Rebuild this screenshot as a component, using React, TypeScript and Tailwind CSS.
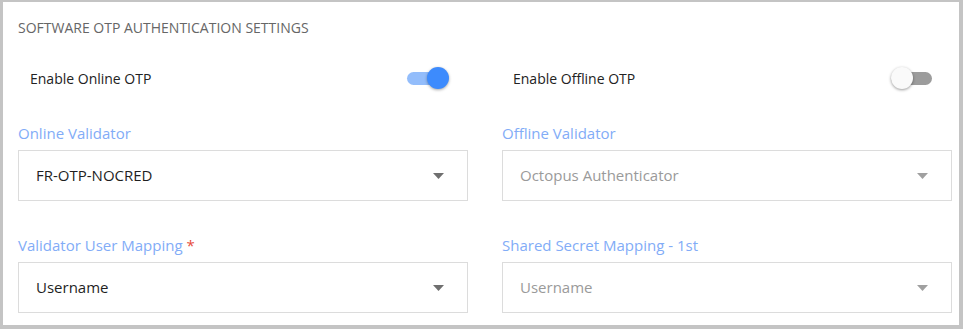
import React from "react";

function Toggle({ on }: { on: boolean }) {
    return (
        <div className="relative w-[42px] h-[24px] flex items-center">
            <div className={`h-[13px] w-[41px] rounded-full ${on ? "bg-[#93bdfb]" : "bg-[#9c9c9c]"}`} />
            {on ? (
                <div className="absolute right-0 top-[1px] size-[22px] rounded-full bg-[#3d8bfd] shadow-[0_1px_3px_rgba(0,0,0,0.35)]" />
            ) : (
                <div className="absolute left-0 top-[1px] size-[22px] rounded-full bg-[#fafafa] shadow-[0_1px_3px_rgba(0,0,0,0.4)]" />
            )}
        </div>
    );
}

function Caret({ disabled }: { disabled?: boolean }) {
    return (
        <svg width="11" height="6" viewBox="0 0 11 6">
            <path d="M0 0 L11 0 L5.5 6 Z" fill={disabled ? "#a0a0a0" : "#6f6f6f"} />
        </svg>
    );
}

function Select({ label, value, required, disabled }: {
    label: string;
    value: string;
    required?: boolean;
    disabled?: boolean;
}) {
    return (
        <div>
            <div className="h-[22px] flex items-center text-[15px] text-[#82acf7]">
                {label}
                {required && <span className="ml-[4px] text-[#e74c3c]">*</span>}
            </div>
            <div className="mt-[6px] h-[51px] border border-[#dcdcdc] flex items-center justify-between pl-[17px] pr-[23px]">
                <span className={`text-[15px] ${disabled ? "text-[#9a9a9a]" : "text-[#1f1f1f]"}`}>{value}</span>
                <Caret disabled={disabled} />
            </div>
        </div>
    );
}

export default function App() {
    return (
        <div
            className="w-[963px] h-[329px] bg-white border-[#c4c4c4] border-l-[3px] border-t-[2px] border-r-[4px] border-b-[4px] pl-[15px] pr-[7px]"
            style={{ fontFamily: '"Open Sans", "Noto Sans", sans-serif' }}
        >
            {/* Header */}
            <div className="h-[24px] mt-[13px] flex items-center text-[14px] text-[#666]">
                SOFTWARE OTP AUTHENTICATION SETTINGS
            </div>

            {/* Toggles */}
            <div className="grid grid-cols-2 gap-x-[34px] mt-[27px]">
                <div className="flex items-center justify-between pl-[12px] pr-[19px] h-[24px]">
                    <span className="text-[14px] text-[#222]">Enable Online OTP</span>
                    <Toggle on />
                </div>
                <div className="flex items-center justify-between pl-[11px] pr-[19px] h-[24px]">
                    <span className="text-[14px] text-[#222]">Enable Offline OTP</span>
                    <Toggle on={false} />
                </div>
            </div>

            {/* Selects */}
            <div className="grid grid-cols-2 gap-x-[34px] gap-y-[33px] mt-[32px]">
                <Select label="Online Validator" value="FR-OTP-NOCRED" />
                <Select label="Offline Validator" value="Octopus Authenticator" disabled />
                <Select label="Validator User Mapping" value="Username" required />
                <Select label="Shared Secret Mapping - 1st" value="Username" disabled />
            </div>
        </div>
    );
}
